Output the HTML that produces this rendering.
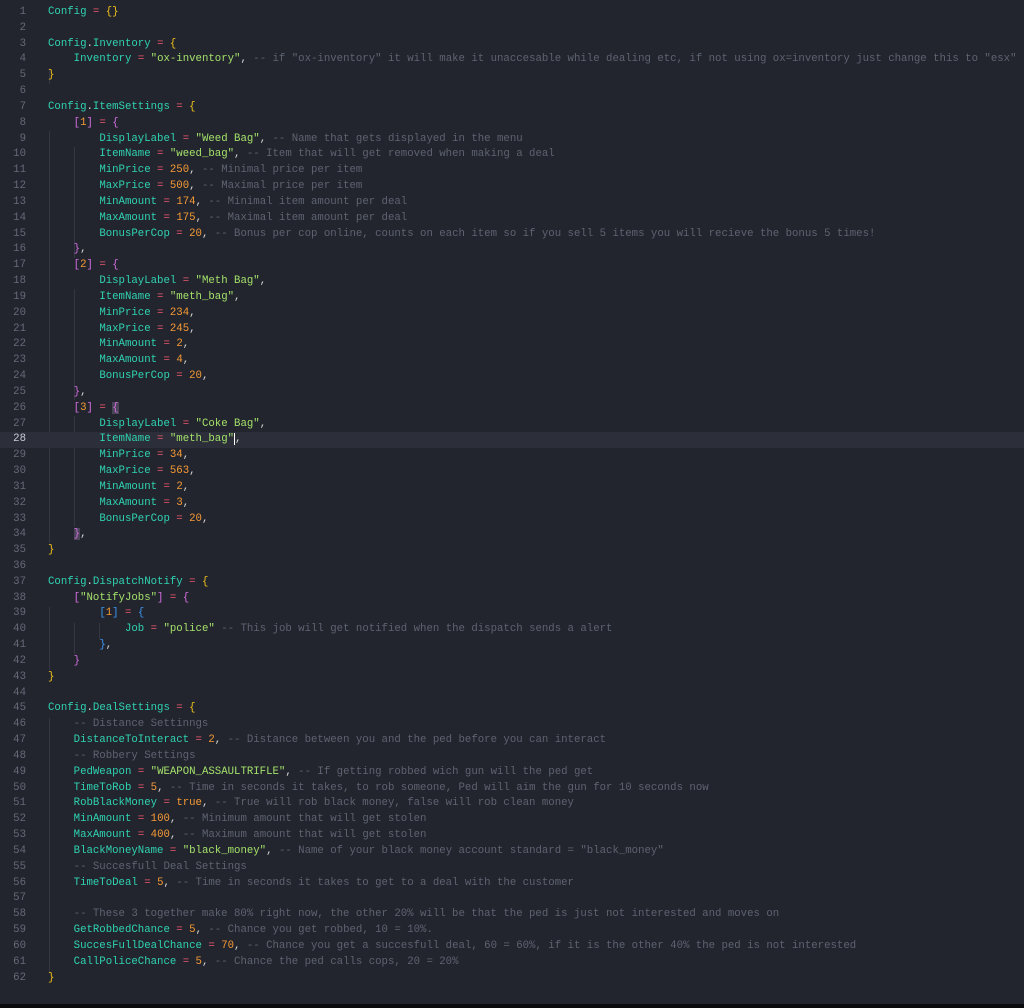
<!DOCTYPE html>
<html><head><meta charset="utf-8"><style>
html,body{margin:0;padding:0;background:#23252e;width:1024px;height:1008px;overflow:hidden}
#ed{position:absolute;left:0;top:5px;width:1024px;font-family:"Liberation Mono",monospace;font-size:10.7px;line-height:15.84px}
.l{position:relative;height:15.84px;white-space:nowrap}
.ln{position:absolute;left:0;width:26px;text-align:right;color:#656a78}
.cd{position:absolute;left:48px;color:#d4d4d4;white-space:pre}
.cur{background:#2c2f39}
.cur .ln{color:#c8ccd4}
.k{color:#2fd3b2}.o{color:#f0566e}.s{color:#a3e06a}.n{color:#f59a35}.c{color:#5d6370}
.b1{color:#f2c21a}.b2{color:#d46ee0}.b3{color:#3c98f2}.p{color:#d4d4d4}
.g{position:absolute;width:1px;background:#343743}
.hl{background:#4a4558}
</style></head><body>
<div class="g" style="left:49px;top:68px;height:16px"></div>
<div class="g" style="left:49px;top:131px;height:412px"></div>
<div class="g" style="left:74px;top:147px;height:111px"></div>
<div class="g" style="left:74px;top:289px;height:111px"></div>
<div class="g" style="left:74px;top:416px;height:111px"></div>
<div class="g" style="left:49px;top:607px;height:63px"></div>
<div class="g" style="left:74px;top:623px;height:31px"></div>
<div class="g" style="left:99px;top:623px;height:16px"></div>
<div class="g" style="left:49px;top:718px;height:254px"></div>
<div style="position:absolute;left:0;top:1004px;width:1024px;height:4px;background:#0b0b0e"></div>
<div id="ed">
<div class="l"><span class="ln">1</span><span class="cd"><span class="k">Config</span> <span class="o">=</span> <span class="b1">{}</span></span></div>
<div class="l"><span class="ln">2</span></div>
<div class="l"><span class="ln">3</span><span class="cd"><span class="k">Config</span>.<span class="k">Inventory</span> <span class="o">=</span> <span class="b1">{</span></span></div>
<div class="l"><span class="ln">4</span><span class="cd">    <span class="k">Inventory</span> <span class="o">=</span> <span class="s">"ox-inventory"</span>, <span class="c">-- if "ox-inventory" it will make it unaccesable while dealing etc, if not using ox=inventory just change this to "esx"</span></span></div>
<div class="l"><span class="ln">5</span><span class="cd"><span class="b1">}</span></span></div>
<div class="l"><span class="ln">6</span></div>
<div class="l"><span class="ln">7</span><span class="cd"><span class="k">Config</span>.<span class="k">ItemSettings</span> <span class="o">=</span> <span class="b1">{</span></span></div>
<div class="l"><span class="ln">8</span><span class="cd">    <span class="b2">[</span><span class="n">1</span><span class="b2">]</span> <span class="o">=</span> <span class="b2">{</span></span></div>
<div class="l"><span class="ln">9</span><span class="cd">        <span class="k">DisplayLabel</span> <span class="o">=</span> <span class="s">"Weed Bag"</span>, <span class="c">-- Name that gets displayed in the menu</span></span></div>
<div class="l"><span class="ln">10</span><span class="cd">        <span class="k">ItemName</span> <span class="o">=</span> <span class="s">"weed_bag"</span>, <span class="c">-- Item that will get removed when making a deal</span></span></div>
<div class="l"><span class="ln">11</span><span class="cd">        <span class="k">MinPrice</span> <span class="o">=</span> <span class="n">250</span>, <span class="c">-- Minimal price per item</span></span></div>
<div class="l"><span class="ln">12</span><span class="cd">        <span class="k">MaxPrice</span> <span class="o">=</span> <span class="n">500</span>, <span class="c">-- Maximal price per item</span></span></div>
<div class="l"><span class="ln">13</span><span class="cd">        <span class="k">MinAmount</span> <span class="o">=</span> <span class="n">174</span>, <span class="c">-- Minimal item amount per deal</span></span></div>
<div class="l"><span class="ln">14</span><span class="cd">        <span class="k">MaxAmount</span> <span class="o">=</span> <span class="n">175</span>, <span class="c">-- Maximal item amount per deal</span></span></div>
<div class="l"><span class="ln">15</span><span class="cd">        <span class="k">BonusPerCop</span> <span class="o">=</span> <span class="n">20</span>, <span class="c">-- Bonus per cop online, counts on each item so if you sell 5 items you will recieve the bonus 5 times!</span></span></div>
<div class="l"><span class="ln">16</span><span class="cd">    <span class="b2">}</span>,</span></div>
<div class="l"><span class="ln">17</span><span class="cd">    <span class="b2">[</span><span class="n">2</span><span class="b2">]</span> <span class="o">=</span> <span class="b2">{</span></span></div>
<div class="l"><span class="ln">18</span><span class="cd">        <span class="k">DisplayLabel</span> <span class="o">=</span> <span class="s">"Meth Bag"</span>,</span></div>
<div class="l"><span class="ln">19</span><span class="cd">        <span class="k">ItemName</span> <span class="o">=</span> <span class="s">"meth_bag"</span>,</span></div>
<div class="l"><span class="ln">20</span><span class="cd">        <span class="k">MinPrice</span> <span class="o">=</span> <span class="n">234</span>,</span></div>
<div class="l"><span class="ln">21</span><span class="cd">        <span class="k">MaxPrice</span> <span class="o">=</span> <span class="n">245</span>,</span></div>
<div class="l"><span class="ln">22</span><span class="cd">        <span class="k">MinAmount</span> <span class="o">=</span> <span class="n">2</span>,</span></div>
<div class="l"><span class="ln">23</span><span class="cd">        <span class="k">MaxAmount</span> <span class="o">=</span> <span class="n">4</span>,</span></div>
<div class="l"><span class="ln">24</span><span class="cd">        <span class="k">BonusPerCop</span> <span class="o">=</span> <span class="n">20</span>,</span></div>
<div class="l"><span class="ln">25</span><span class="cd">    <span class="b2">}</span>,</span></div>
<div class="l"><span class="ln">26</span><span class="cd">    <span class="b2">[</span><span class="n">3</span><span class="b2">]</span> <span class="o">=</span> <span class="b2 hl">{</span></span></div>
<div class="l"><span class="ln">27</span><span class="cd">        <span class="k">DisplayLabel</span> <span class="o">=</span> <span class="s">"Coke Bag"</span>,</span></div>
<div class="l cur"><span class="ln">28</span><span class="cd">        <span class="k">ItemName</span> <span class="o">=</span> <span class="s">"meth_bag<span style="border-right:1px solid #fff">"</span></span>,</span></div>
<div class="l"><span class="ln">29</span><span class="cd">        <span class="k">MinPrice</span> <span class="o">=</span> <span class="n">34</span>,</span></div>
<div class="l"><span class="ln">30</span><span class="cd">        <span class="k">MaxPrice</span> <span class="o">=</span> <span class="n">563</span>,</span></div>
<div class="l"><span class="ln">31</span><span class="cd">        <span class="k">MinAmount</span> <span class="o">=</span> <span class="n">2</span>,</span></div>
<div class="l"><span class="ln">32</span><span class="cd">        <span class="k">MaxAmount</span> <span class="o">=</span> <span class="n">3</span>,</span></div>
<div class="l"><span class="ln">33</span><span class="cd">        <span class="k">BonusPerCop</span> <span class="o">=</span> <span class="n">20</span>,</span></div>
<div class="l"><span class="ln">34</span><span class="cd">    <span class="b2 hl">}</span>,</span></div>
<div class="l"><span class="ln">35</span><span class="cd"><span class="b1">}</span></span></div>
<div class="l"><span class="ln">36</span></div>
<div class="l"><span class="ln">37</span><span class="cd"><span class="k">Config</span>.<span class="k">DispatchNotify</span> <span class="o">=</span> <span class="b1">{</span></span></div>
<div class="l"><span class="ln">38</span><span class="cd">    <span class="b2">[</span><span class="s">"NotifyJobs"</span><span class="b2">]</span> <span class="o">=</span> <span class="b2">{</span></span></div>
<div class="l"><span class="ln">39</span><span class="cd">        <span class="b3">[</span><span class="n">1</span><span class="b3">]</span> <span class="o">=</span> <span class="b3">{</span></span></div>
<div class="l"><span class="ln">40</span><span class="cd">            <span class="k">Job</span> <span class="o">=</span> <span class="s">"police"</span> <span class="c">-- This job will get notified when the dispatch sends a alert</span></span></div>
<div class="l"><span class="ln">41</span><span class="cd">        <span class="b3">}</span>,</span></div>
<div class="l"><span class="ln">42</span><span class="cd">    <span class="b2">}</span></span></div>
<div class="l"><span class="ln">43</span><span class="cd"><span class="b1">}</span></span></div>
<div class="l"><span class="ln">44</span></div>
<div class="l"><span class="ln">45</span><span class="cd"><span class="k">Config</span>.<span class="k">DealSettings</span> <span class="o">=</span> <span class="b1">{</span></span></div>
<div class="l"><span class="ln">46</span><span class="cd">    <span class="c">-- Distance Settinngs</span></span></div>
<div class="l"><span class="ln">47</span><span class="cd">    <span class="k">DistanceToInteract</span> <span class="o">=</span> <span class="n">2</span>, <span class="c">-- Distance between you and the ped before you can interact</span></span></div>
<div class="l"><span class="ln">48</span><span class="cd">    <span class="c">-- Robbery Settings</span></span></div>
<div class="l"><span class="ln">49</span><span class="cd">    <span class="k">PedWeapon</span> <span class="o">=</span> <span class="s">"WEAPON_ASSAULTRIFLE"</span>, <span class="c">-- If getting robbed wich gun will the ped get</span></span></div>
<div class="l"><span class="ln">50</span><span class="cd">    <span class="k">TimeToRob</span> <span class="o">=</span> <span class="n">5</span>, <span class="c">-- Time in seconds it takes, to rob someone, Ped will aim the gun for 10 seconds now</span></span></div>
<div class="l"><span class="ln">51</span><span class="cd">    <span class="k">RobBlackMoney</span> <span class="o">=</span> <span class="n">true</span>, <span class="c">-- True will rob black money, false will rob clean money</span></span></div>
<div class="l"><span class="ln">52</span><span class="cd">    <span class="k">MinAmount</span> <span class="o">=</span> <span class="n">100</span>, <span class="c">-- Minimum amount that will get stolen</span></span></div>
<div class="l"><span class="ln">53</span><span class="cd">    <span class="k">MaxAmount</span> <span class="o">=</span> <span class="n">400</span>, <span class="c">-- Maximum amount that will get stolen</span></span></div>
<div class="l"><span class="ln">54</span><span class="cd">    <span class="k">BlackMoneyName</span> <span class="o">=</span> <span class="s">"black_money"</span>, <span class="c">-- Name of your black money account standard = "black_money"</span></span></div>
<div class="l"><span class="ln">55</span><span class="cd">    <span class="c">-- Succesfull Deal Settings</span></span></div>
<div class="l"><span class="ln">56</span><span class="cd">    <span class="k">TimeToDeal</span> <span class="o">=</span> <span class="n">5</span>, <span class="c">-- Time in seconds it takes to get to a deal with the customer</span></span></div>
<div class="l"><span class="ln">57</span></div>
<div class="l"><span class="ln">58</span><span class="cd">    <span class="c">-- These 3 together make 80% right now, the other 20% will be that the ped is just not interested and moves on</span></span></div>
<div class="l"><span class="ln">59</span><span class="cd">    <span class="k">GetRobbedChance</span> <span class="o">=</span> <span class="n">5</span>, <span class="c">-- Chance you get robbed, 10 = 10%.</span></span></div>
<div class="l"><span class="ln">60</span><span class="cd">    <span class="k">SuccesFullDealChance</span> <span class="o">=</span> <span class="n">70</span>, <span class="c">-- Chance you get a succesfull deal, 60 = 60%, if it is the other 40% the ped is not interested</span></span></div>
<div class="l"><span class="ln">61</span><span class="cd">    <span class="k">CallPoliceChance</span> <span class="o">=</span> <span class="n">5</span>, <span class="c">-- Chance the ped calls cops, 20 = 20%</span></span></div>
<div class="l"><span class="ln">62</span><span class="cd"><span class="b1">}</span></span></div>
</div>
</body></html>
